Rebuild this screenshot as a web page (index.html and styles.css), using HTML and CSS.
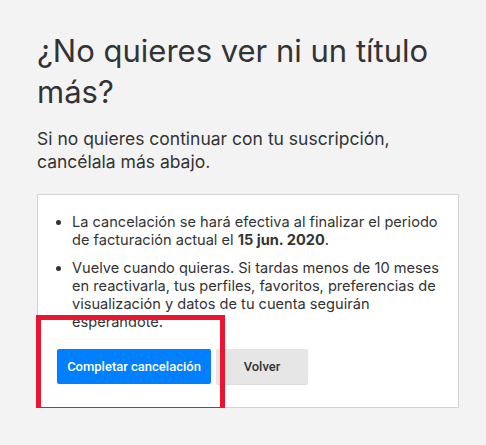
FILE: index.html
```html
<!DOCTYPE html>
<html lang="es">
<head>
<meta charset="utf-8">
<link rel="stylesheet" href="styles.css">
</head>
<body>
<div class="page">
  <h1 class="title">¿No quieres ver ni un título más?</h1>
  <p class="lead">Si no quieres continuar con tu suscripción, cancélala más abajo.</p>
  <div class="card">
    <ul class="points">
      <li>La cancelación se hará efectiva al finalizar el periodo de facturación actual el <strong>15 jun. 2020</strong>.</li>
      <li>Vuelve cuando quieras. Si tardas menos de 10 meses en reactivarla, tus perfiles, favoritos, preferencias de visualización y datos de tu cuenta seguirán esperandote.</li>
    </ul>
    <div class="actions">
      <button class="btn btn-primary">Completar cancelación</button>
      <button class="btn btn-secondary">Volver</button>
    </div>
    <div class="highlight"></div>
  </div>
</div>
</body>
</html>
```
FILE: styles.css
```css
html, body {
  margin: 0;
  padding: 0;
  background: #f3f3f3;
}
body {
  font-family: "Inter", "Noto Sans", sans-serif;
  color: #333;
}
.page {
  width: 422px;
  padding: 30px 0 0 37px;
}
.title {
  margin: 0;
  font-size: 31px;
  font-weight: 400;
  line-height: 41px;
  color: #333;
}
.lead {
  margin: 16px 0 21px;
  font-size: 17.5px;
  line-height: 22.5px;
  color: #333;
}
.card {
  position: relative;
  background: #fff;
  border: 1px solid #d2d2d2;
  padding: 18px 6px 23px 19px;
}
.points {
  margin: 0;
  padding: 0 0 0 15px;
  font-size: 14.6px;
  line-height: 18px;
  color: #333;
}
.points li + li {
  margin-top: 10px;
}
.points strong {
  font-weight: 700;
}
.actions {
  display: flex;
  gap: 5px;
  margin-top: 18px;
}
.btn {
  height: 35px;
  border: 0;
  border-radius: 2px;
  font-family: "Roboto", "Liberation Sans", sans-serif;
  font-size: 13px;
  font-weight: 500;
  padding: 0;
}
.btn-primary {
  width: 154px;
  background: #0080ff;
  color: #fff;
}
.btn-secondary {
  width: 92px;
  background: #e6e6e6;
  color: #333;
  box-shadow: 0 1px 1px rgba(0,0,0,0.15);
}
.highlight {
  position: absolute;
  box-sizing: border-box;
  left: -2px;
  top: 120px;
  width: 189px;
  height: 97px;
  border: 5px solid #ea1631;
}
```
